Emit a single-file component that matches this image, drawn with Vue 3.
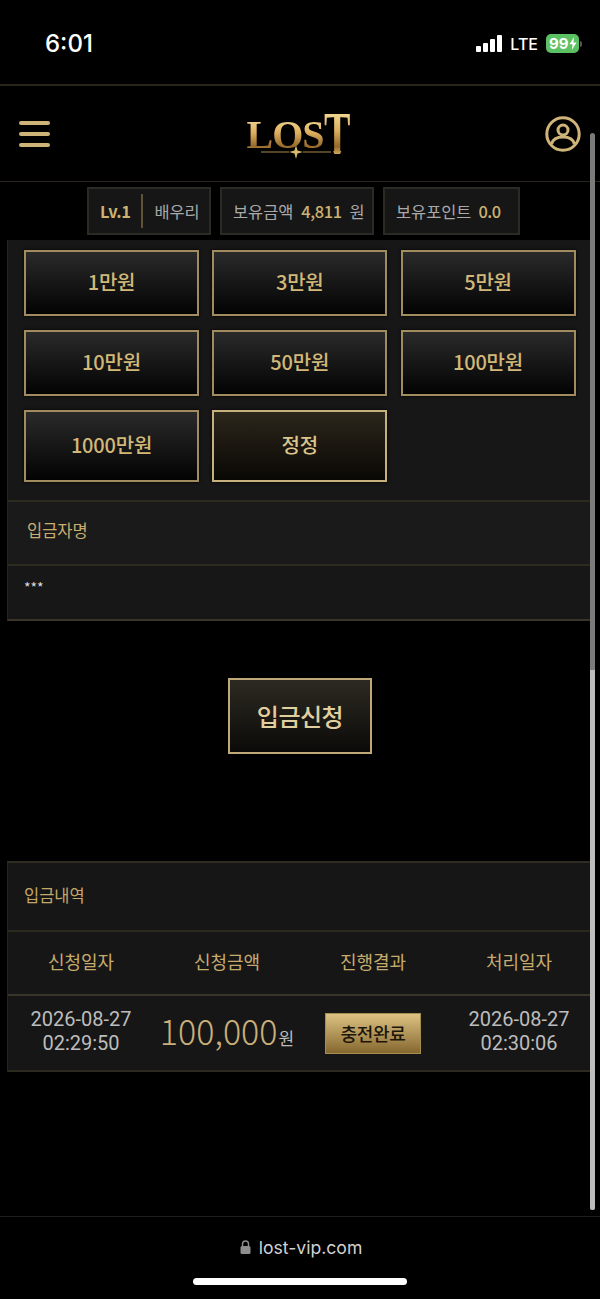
<template>
  <div class="page">
    <!-- status bar -->
    <div class="status">
      <span class="time">6:01</span>
      <div class="status-right">
        <div class="signal"><i></i><i></i><i></i><i></i></div>
        <span class="lte">LTE</span>
        <div class="battery">
          <span>99</span>
          <svg width="8" height="13" viewBox="0 0 8 13"><path d="M5 0 0.5 7.2H3.6L2.8 13 7.6 5.4H4.4Z" fill="#fff" /></svg>
        </div>
        <i class="nub"></i>
      </div>
    </div>

    <!-- header -->
    <header class="top">
      <div class="burger"><i></i><i></i><i></i></div>
      <div class="logo">
        <span class="los">LOS</span><span class="los-t">T</span>
        <svg class="logo-orn" width="70" height="14" viewBox="0 0 70 14">
          <path d="M0 7H28M42 7H70" stroke="#a98a4a" stroke-width="1" />
          <path d="M35 0 36.5 5.5 42 7 36.5 8.5 35 14 33.5 8.5 28 7 33.5 5.5Z" fill="#d9b96f" />
        </svg>
      </div>
      <svg class="user" width="36" height="36" viewBox="0 0 36 36" fill="none" stroke="#cfb479" stroke-width="3">
        <circle cx="18" cy="18" r="16.2" />
        <circle cx="18" cy="14" r="5" />
        <path d="M6.5 28C8 22.5 12.5 21 18 21S28 22.5 29.5 28" />
      </svg>
    </header>

    <!-- user info -->
    <div class="info">
      <div class="chip c1">
        <b class="gold lv">Lv.1</b><i class="sep"></i><span>배우리</span>
      </div>
      <div class="chip c2"><span>보유금액</span><b class="gold">4,811</b><span>원</span></div>
      <div class="chip c3"><span>보유포인트</span><b class="gold">0.0</b></div>
    </div>

    <!-- amount -->
    <section class="panel">
      <div class="amounts">
        <button v-for="a in amounts" :key="a" class="amt">{{ a }}</button>
        <button class="amt reset">정정</button>
      </div>
      <div class="row label">입금자명</div>
      <div class="row value">***</div>
    </section>

    <div class="submit-wrap">
      <button class="submit">입금신청</button>
    </div>

    <!-- history -->
    <section class="history">
      <div class="hist-title">입금내역</div>
      <div class="hist-grid head">
        <div v-for="h in heads" :key="h">{{ h }}</div>
      </div>
      <div class="hist-grid data">
        <div class="date">2026-08-27<br />02:29:50</div>
        <div class="money"><span>100,000</span><small>원</small></div>
        <div><span class="badge">충전완료</span></div>
        <div class="date">2026-08-27<br />02:30:06</div>
      </div>
    </section>

    <!-- browser bar -->
    <footer class="bottom">
      <div class="url">
        <svg width="11" height="14" viewBox="0 0 11 14">
          <path d="M2.5 6V4a3 3 0 0 1 6 0v2" fill="none" stroke="#8e8e8e" stroke-width="1.4" />
          <rect x="0.5" y="6" width="10" height="8" rx="1.5" fill="#8e8e8e" />
        </svg>
        <span>lost-vip.com</span>
      </div>
      <div class="home"></div>
    </footer>

    <div class="scroll"><i></i></div>
  </div>
</template>

<script setup>
const amounts = ['1만원', '3만원', '5만원', '10만원', '50만원', '100만원', '1000만원']
const heads = ['신청일자', '신청금액', '진행결과', '처리일자']
</script>

<style>
html,
body {
  background: #000;
}
</style>

<style scoped>
.page {
  position: relative;
  width: 600px;
  height: 1299px;
  overflow: hidden;
  display: flex;
  flex-direction: column;
  background: #000;
  font-family: "Noto Sans CJK KR", "Noto Sans", sans-serif;
  color: #bbb;
}

/* status bar */
.status {
  height: 86px;
  box-sizing: border-box;
  padding: 3px 18px 0 45px;
  display: flex;
  align-items: center;
  justify-content: space-between;
  border-bottom: 2px solid #2a251c;
  flex: none;
}
.time {
  font-family: Inter, Roboto, sans-serif;
  font-size: 24px;
  font-weight: 500;
  color: #fff;
}
.status-right {
  display: flex;
  align-items: center;
}
.signal {
  display: flex;
  align-items: flex-end;
  gap: 2px;
  height: 17px;
  margin-right: 8px;
}
.signal i {
  width: 5px;
  background: #fff;
  border-radius: 1px;
}
.signal i:nth-child(1) { height: 6px; }
.signal i:nth-child(2) { height: 9px; }
.signal i:nth-child(3) { height: 13px; }
.signal i:nth-child(4) { height: 17px; }
.lte {
  font-family: Inter, Roboto, sans-serif;
  font-size: 16px;
  font-weight: 500;
  color: #fff;
  margin-right: 8px;
}
.battery {
  width: 33px;
  height: 19px;
  box-sizing: border-box;
  padding-left: 3px;
  background: #5bc163;
  border-radius: 5px;
  display: flex;
  align-items: center;
  gap: 1px;
  font-family: Inter, Roboto, sans-serif;
  font-size: 15px;
  font-weight: 700;
  color: #fff;
}
.nub {
  width: 2px;
  height: 6px;
  margin-left: 1px;
  background: #555;
  border-radius: 0 2px 2px 0;
}

/* header */
.top {
  height: 96px;
  flex: none;
  box-sizing: border-box;
  padding: 0 19px;
  display: flex;
  align-items: center;
  justify-content: space-between;
  border-bottom: 1px solid #2a251c;
}
.burger {
  width: 31px;
  display: flex;
  flex-direction: column;
  gap: 7px;
}
.burger i {
  height: 4px;
  border-radius: 2px;
  background: #cfb479;
}
.logo {
  position: relative;
  display: flex;
  align-items: flex-end;
  height: 44px;
  width: 104px;
  margin-left: 2px;
  font-family: "Liberation Serif", serif;
  font-weight: 700;
}
.los,
.los-t {
  background: linear-gradient(180deg, #f7e0a0 0%, #dcae5e 45%, #96692a 78%, #e6c070 100%);
  -webkit-background-clip: text;
  background-clip: text;
  color: transparent;
}
.los {
  font-size: 40px;
  line-height: 40px;
  letter-spacing: -1px;
  margin-bottom: 1px;
}
.los-t {
  display: inline-block;
  font-size: 62px;
  line-height: 48px;
  flex: none;
  margin-right: -14px;
  margin-bottom: -1px;
  transform: scaleX(0.64);
  transform-origin: 0 50%;
  clip-path: polygon(0 0, 100% 0, 100% 50%, 56% 100%, 44% 100%, 0 50%);
}
.logo-orn {
  position: absolute;
  left: 14px;
  bottom: -3px;
}
.user {
  margin-right: 0;
}

/* info chips */
.info {
  flex: none;
  height: 58px;
  box-sizing: border-box;
  padding: 5px 0 0 87px;
  display: flex;
  gap: 9px;
}
.chip {
  height: 48px;
  box-sizing: border-box;
  padding: 0 11px;
  display: flex;
  align-items: center;
  gap: 8px;
  background: #161616;
  border: 2px solid #2c2a24;
  font-size: 16.4px;
  color: #a9a9a9;
  white-space: nowrap;
  flex: none;
}
.c1 { width: 124px; gap: 11px; }
.c2 { width: 154px; }
.c3 { width: 137px; gap: 7px; }
.gold {
  color: #cdb271;
  font-weight: 500;
  letter-spacing: -0.4px;
}
.lv {
  font-weight: 700;
  letter-spacing: -0.4px;
}
.sep {
  width: 2px;
  height: 34px;
  background: #5f5236;
  flex: none;
}

/* amount panel */
.panel {
  flex: none;
  margin: 0 7px;
  background: #171717;
  box-sizing: border-box;
  height: 381px;
  border-left: 1px solid #26241d;
  border-bottom: 2px solid #3a3526;
}
.amounts {
  display: grid;
  grid-template-columns: repeat(3, 175px);
  grid-template-rows: 66px 66px 72px;
  column-gap: 13.25px;
  row-gap: 14px;
  padding: 10px 0 18px 16px;
}
.amt {
  background: linear-gradient(180deg, #2a2a2a 0%, #030303 100%);
  border: 2px solid #a08c5e;
  box-shadow: 0 0 3px #000;
  font-family: inherit;
  font-size: 20px;
  font-weight: 500;
  letter-spacing: -0.2px;
  color: #d2b878;
  padding: 0 0 4px;
}
.amt.reset {
  background: linear-gradient(180deg, #2c261b 0%, #0a0805 100%);
  border-color: #c6b07e;
  color: #dcc48c;
}
.row {
  display: flex;
  align-items: center;
  border-top: 2px solid #2d2a20;
  box-sizing: border-box;
}
.label {
  height: 64px;
  padding: 0 0 6px 19px;
  background: #1a1a1a;
  font-size: 16.5px;
  color: #c9ae72;
}
.value {
  height: 57px;
  padding: 0 0 14px 16px;
  font-size: 14px;
  color: #ddd;
}

/* submit */
.submit-wrap {
  flex: none;
  padding: 57px 0 107px;
  display: flex;
  justify-content: center;
}
.submit {
  width: 144px;
  height: 76px;
  background: linear-gradient(180deg, #2d2a22 0%, #0b0a08 100%);
  border: 2px solid #bfa978;
  font-family: inherit;
  font-size: 24px;
  font-weight: 500;
  color: #e2cf9f;
  letter-spacing: -0.5px;
  padding: 0 0 2px;
}

/* history */
.history {
  flex: none;
  margin: 0 7px;
  background: #161616;
  border-top: 2px solid #2f2c21;
  border-bottom: 2px solid #2d2a20;
  border-left: 1px solid #26241d;
}
.hist-title {
  height: 67px;
  box-sizing: border-box;
  padding: 0 0 4px 16px;
  display: flex;
  align-items: center;
  font-size: 16.5px;
  color: #c4a868;
}
.hist-grid {
  display: grid;
  grid-template-columns: repeat(4, 146px);
  box-sizing: border-box;
  text-align: center;
  align-items: center;
  border-top: 2px solid #2b281e;
}
.head {
  height: 64px;
  padding-bottom: 4px;
  font-size: 18px;
  color: #c6ab6d;
}
.data {
  height: 76px;
  border-top-color: #39352a;
}
.date {
  margin-bottom: 4px;
  font-family: Roboto, sans-serif;
  font-size: 20px;
  line-height: 24px;
  color: #bdbdbd;
}
.money {
  margin-bottom: 6px;
  white-space: nowrap;
  color: #c9b07a;
}
.money span {
  font-size: 34px;
  font-weight: 300;
}
.money small {
  font-size: 17px;
  margin-left: 1px;
  color: #bdbdbd;
}
.badge {
  display: inline-block;
  width: 96px;
  line-height: 39px;
  background: linear-gradient(180deg, #dcc283 0%, #86682f 100%);
  border: 1px solid #a88d52;
  box-sizing: border-box;
  font-size: 18px;
  font-weight: 500;
  letter-spacing: -0.3px;
  color: #1c150a;
}

/* bottom bar */
.bottom {
  position: absolute;
  left: 0;
  right: 0;
  bottom: 0;
  height: 83px;
  box-sizing: border-box;
  border-top: 1px solid #1e1e1e;
  background: #000;
  display: flex;
  flex-direction: column;
  align-items: center;
  padding-top: 18px;
}
.url {
  display: flex;
  align-items: center;
  gap: 8px;
  height: 24px;
  margin-left: 2px;
  font-family: Inter, Roboto, sans-serif;
  font-size: 17.6px;
  color: #d2d2d2;
}
.home {
  width: 214px;
  height: 7px;
  margin: 19px 0 0;
  border-radius: 4px;
  background: #fff;
}

/* iOS scroll indicator */
.scroll {
  position: absolute;
  left: 590px;
  top: 133px;
  width: 5px;
  height: 1077px;
  border-radius: 3px;
  overflow: hidden;
  background: #7b7b7b;
}
.scroll i {
  display: block;
  margin-top: 537px;
  height: 540px;
  background: #bdbdbd;
}
</style>
